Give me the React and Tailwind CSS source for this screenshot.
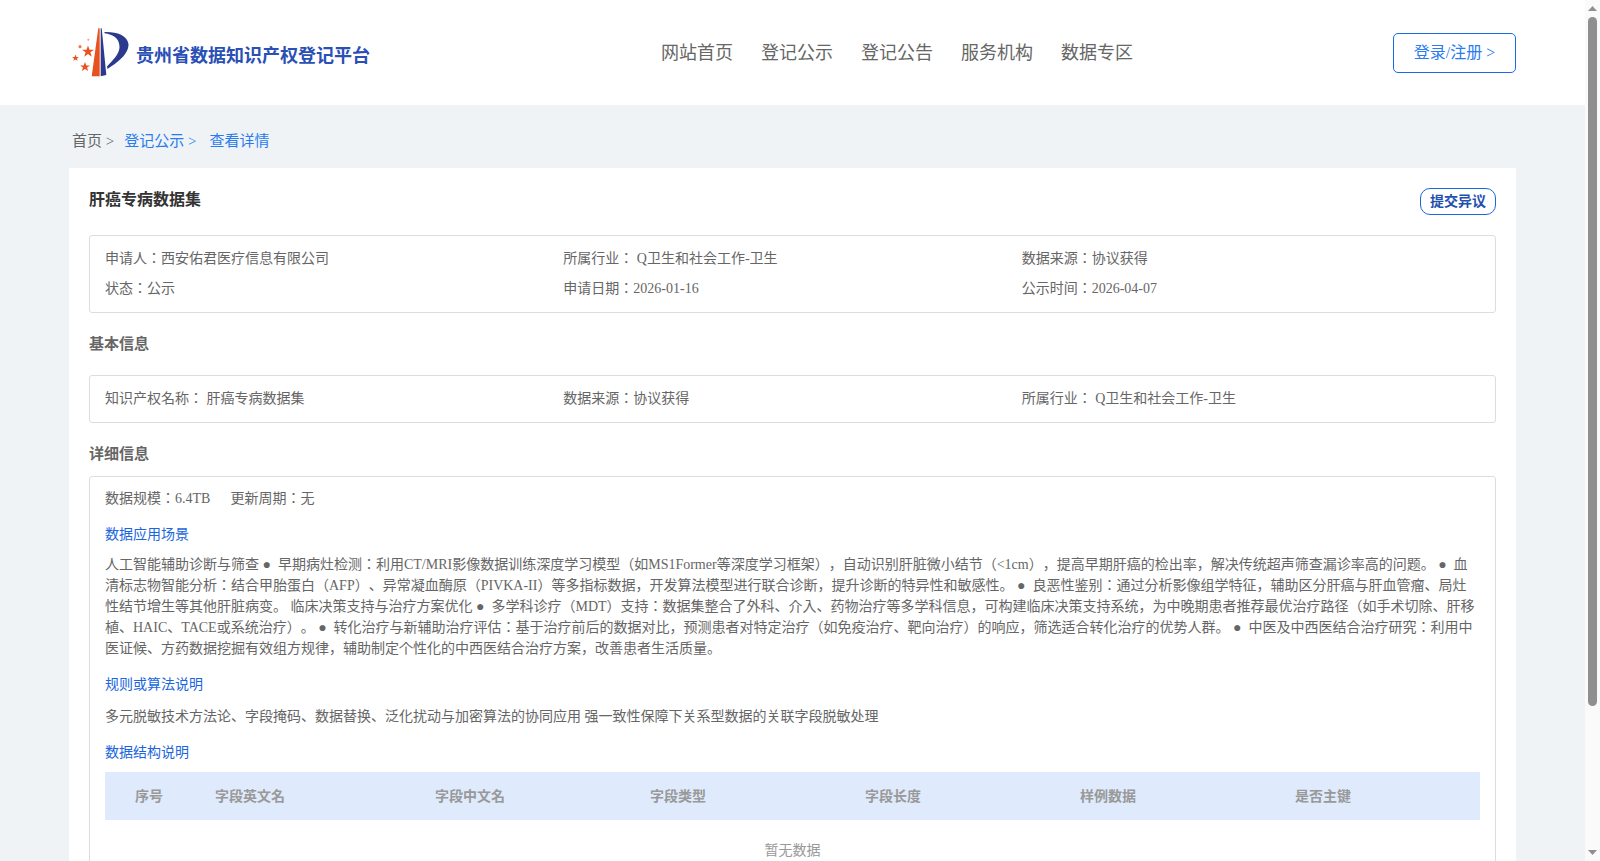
const navItems = ['网站首页', '登记公示', '登记公告', '服务机构', '数据专区'];
const tableCols = ['字段英文名', '字段中文名', '字段类型', '字段长度', '样例数据', '是否主键'];

const Logo = () => (
  <svg width="58" height="50" viewBox="0 0 58 50" className="shrink-0">
    <path d="M26.3 1.3 L27.7 1.3 L27.7 49.3 L19.7 49.3 Z" fill="#e8521f" />
    <path d="M28.7 1.3 L29.7 1.3 L34.3 48 L28.7 49.3 Z" fill="#2b3a8f" />
    <path d="M32.5 5 C44 4.5 55 8 56.5 17 C57 27 45 36 35.5 42 L35 39.5 C41 33 47.5 27 47.5 20 C47.5 11 41 7.5 32.5 6.2 Z" fill="#2b3a8f" />
    <polygon points="16,18.5 17.5,22.7 22,22.7 18.4,25.3 19.7,29.7 16,27.1 12.3,29.7 13.6,25.3 10,22.7 14.5,22.7" fill="#e8521f" />
    <polygon points="13,35 14.3,38.4 18,38.4 15,40.6 16.2,44 13,42 9.8,44 11,40.6 8,38.4 11.7,38.4" fill="#e8521f" />
    <polygon points="3.5,27.5 4.4,29.9 7,29.9 4.9,31.4 5.7,33.8 3.5,32.4 1.3,33.8 2.1,31.4 0,29.9 2.6,29.9" fill="#e8521f" />
    <circle cx="8" cy="19.7" r="1.6" fill="#ee7a4e" />
    <circle cx="16.3" cy="12.7" r="1" fill="#f29a78" />
  </svg>
);

const Header = () => (
  <div className="h-[105px] bg-white flex items-center pl-[72px] pr-[69px]">
    <div className="w-[589px] flex items-center gap-[6px] pb-[2px]">
      <Logo />
      <span className="text-[18px] font-bold text-[#2a4fb5] mt-[10px]">贵州省数据知识产权登记平台</span>
    </div>
    <div className="flex gap-[28px] text-[18px] text-[#666] mt-[1px]">
      {navItems.map((n) => (
        <span key={n}>{n}</span>
      ))}
    </div>
    <button className="ml-auto w-[123px] h-[40px] border border-[#1a6ae8] rounded-[5px] text-[16px] text-[#2a7bf0]">登录/注册 &gt;</button>
  </div>
);

const InfoRow = ({ items }) => (
  <div className="grid grid-cols-3">
    {items.map((t) => (
      <div key={t} className="h-[30px] leading-[30px]">{t}</div>
    ))}
  </div>
);

const SectionTitle = ({ children }) => (
  <div className="text-[15px] font-bold text-[#666] leading-[22px]">{children}</div>
);

const BlueLabel = ({ children, className }) => (
  <div className={`text-[#1a66dd] leading-[21px] ${className}`}>{children}</div>
);

// the browser's own scrollbar does not show in the photo, so it is drawn here
const ScrollBar = () => (
  <div className="w-[15px] h-full shrink-0 bg-[#fafafa] flex flex-col items-center">
    <svg width="15" height="17" viewBox="0 0 15 17"><path d="M3 11 L7.5 6 L12 11 Z" fill="#8f8f8f" /></svg>
    <div className="w-[9px] h-[689px] rounded-full bg-[#8f8f8f]" />
    <svg width="15" height="17" viewBox="0 0 15 17" className="mt-auto"><path d="M3 6 L12 6 L7.5 11 Z" fill="#8f8f8f" /></svg>
  </div>
);

export default function App() {
  return (
    <div className="h-screen flex overflow-hidden bg-[#eff3f6] text-[14px] text-[#666] [text-spacing-trim:space-all] font-['Liberation_Serif','Noto_Sans_CJK_JP',serif]">
      <div className="flex-1 min-w-0 overflow-y-auto [scrollbar-width:none]">
        <Header />
        <div className="px-[69px]">
          <div className="h-[63px] flex items-center pl-[3px] pt-[9px] text-[15px]">
            <span className="text-[#666]">首页 &gt;</span>
            <span className="ml-[10px] text-[#2a7bf0]">登记公示 &gt;</span>
            <span className="ml-[13px] text-[#2a7bf0]">查看详情</span>
          </div>
          <div className="bg-white h-[867px] px-[20px] pt-[20px]">
            <div className="flex justify-between items-center h-[27px]">
              <div className="text-[16px] font-bold text-[#333] pb-[4px]">肝癌专病数据集</div>
              <button className="w-[76px] h-[27px] border border-[#1a66e0] rounded-[10px] text-[14px] font-bold text-[#1e50b0]">提交异议</button>
            </div>
            <div className="mt-[20px] h-[78px] border border-[#ddd] rounded-[3px] px-[15px] py-[8px]">
              <InfoRow items={['申请人：西安佑君医疗信息有限公司', '所属行业： Q卫生和社会工作-卫生', '数据来源：协议获得']} />
              <InfoRow items={['状态：公示', '申请日期：2026-01-16', '公示时间：2026-04-07']} />
            </div>
            <div className="mt-[20px]">
              <SectionTitle>基本信息</SectionTitle>
            </div>
            <div className="mt-[20px] h-[48px] border border-[#ddd] rounded-[3px] px-[15px] py-[8px]">
              <InfoRow items={['知识产权名称： 肝癌专病数据集', '数据来源：协议获得', '所属行业： Q卫生和社会工作-卫生']} />
            </div>
            <div className="mt-[20px]">
              <SectionTitle>详细信息</SectionTitle>
            </div>
            <div className="mt-[11px] h-[700px] border border-[#ddd] rounded-[3px] px-[15px] pt-[11px]">
              <div className="leading-[21px]">
                数据规模：6.4TB<span className="ml-[20px]">更新周期：无</span>
              </div>
              <BlueLabel className="mt-[15px]">数据应用场景</BlueLabel>
              <p className="mt-[9px] leading-[21px]">
                人工智能辅助诊断与筛查 ●&nbsp; 早期病灶检测：利用CT/MRI影像数据训练深度学习模型（如MS1Former等深度学习框架），自动识别肝脏微小结节（&lt;1cm），提高早期肝癌的检出率，解决传统超声筛查漏诊率高的问题。 ●&nbsp; 血清标志物智能分析：结合甲胎蛋白（AFP）、异常凝血酶原（PIVKA-II）等多指标数据，开发算法模型进行联合诊断，提升诊断的特异性和敏感性。 ●&nbsp; 良恶性鉴别：通过分析影像组学特征，辅助区分肝癌与肝血管瘤、局灶性结节增生等其他肝脏病变。 临床决策支持与治疗方案优化 ●&nbsp; 多学科诊疗（MDT）支持：数据集整合了外科、介入、药物治疗等多学科信息，可构建临床决策支持系统，为中晚期患者推荐最优治疗路径（如手术切除、肝移植、HAIC、TACE或系统治疗）。 ●&nbsp; 转化治疗与新辅助治疗评估：基于治疗前后的数据对比，预测患者对特定治疗（如免疫治疗、靶向治疗）的响应，筛选适合转化治疗的优势人群。 ●&nbsp; 中医及中西医结合治疗研究：利用中医证候、方药数据挖掘有效组方规律，辅助制定个性化的中西医结合治疗方案，改善患者生活质量。
              </p>
              <BlueLabel className="mt-[15px]">规则或算法说明</BlueLabel>
              <p className="mt-[11px] leading-[21px]">多元脱敏技术方法论、字段掩码、数据替换、泛化扰动与加密算法的协同应用 强一致性保障下关系型数据的关联字段脱敏处理</p>
              <BlueLabel className="mt-[15px]">数据结构说明</BlueLabel>
              <div className="mt-[9px] h-[48px] bg-[#dfebfd] grid grid-cols-[110px_220px_215px_215px_215px_215px_1fr] items-center font-bold text-[#999]">
                <span className="pl-[30px]">序号</span>
                {tableCols.map((c) => (
                  <span key={c}>{c}</span>
                ))}
              </div>
              <div className="h-[60px] flex items-center justify-center text-[#999]">暂无数据</div>
            </div>
          </div>
        </div>
      </div>
      <ScrollBar />
    </div>
  );
}
